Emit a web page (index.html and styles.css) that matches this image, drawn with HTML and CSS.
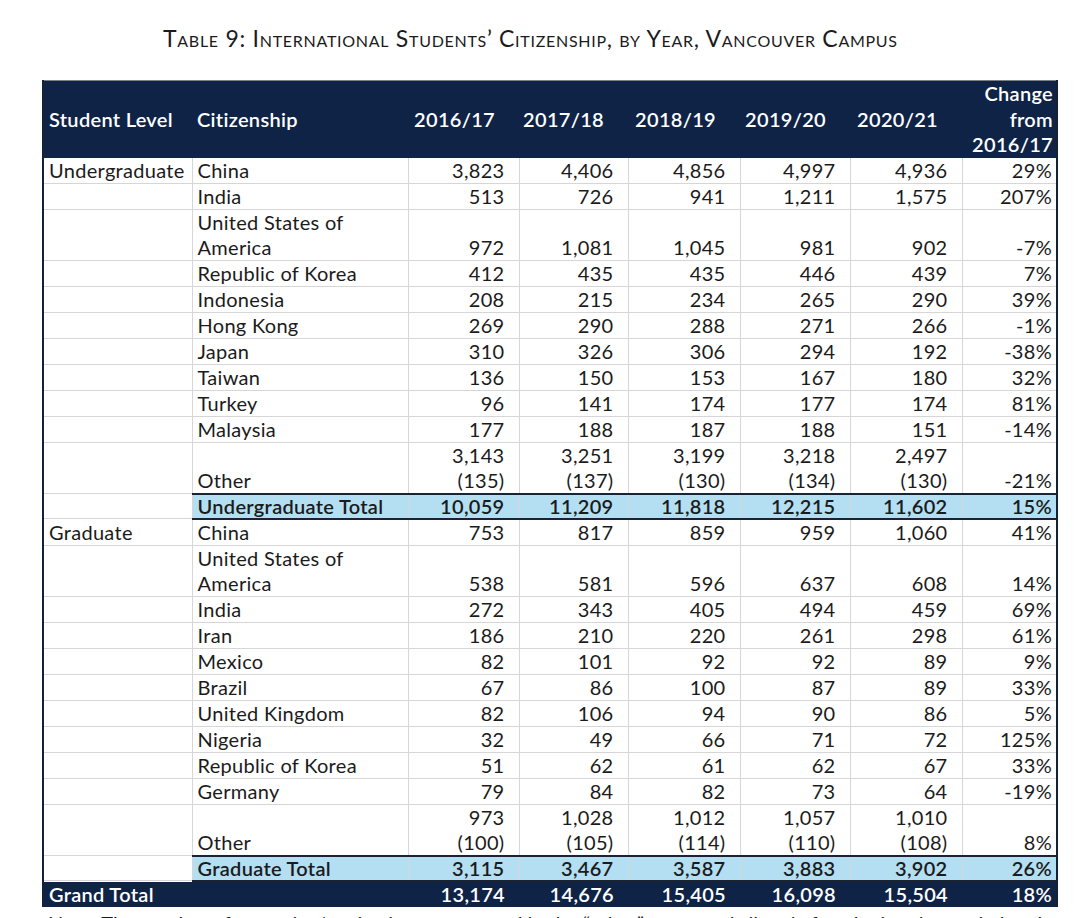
FILE: index.html
```html
<!DOCTYPE html>
<html>
<head>
<meta charset="utf-8">
<link rel="stylesheet" href="styles.css">
</head>
<body>
<div class="page">
  <h1 class="title">Table 9: International Students’ Citizenship, by Year, Vancouver Campus</h1>
  <table class="data">
    <colgroup>
      <col class="c-level"><col class="c-cit"><col class="c-y1"><col class="c-y2"><col class="c-y3"><col class="c-y4"><col class="c-y5"><col class="c-chg">
    </colgroup>
    <thead>
      <tr>
        <th class="lft">Student Level</th>
        <th class="lft">Citizenship</th>
        <th class="yr">2016/17</th>
        <th class="yr">2017/18</th>
        <th class="yr">2018/19</th>
        <th class="yr">2019/20</th>
        <th class="yr">2020/21</th>
        <th class="chg">Change<br>from<br>2016/17</th>
      </tr>
    </thead>
    <tbody>
      <tr><td>Undergraduate</td><td>China</td><td class="n">3,823</td><td class="n">4,406</td><td class="n">4,856</td><td class="n">4,997</td><td class="n">4,936</td><td class="p">29%</td></tr>
      <tr><td></td><td>India</td><td class="n">513</td><td class="n">726</td><td class="n">941</td><td class="n">1,211</td><td class="n">1,575</td><td class="p">207%</td></tr>
      <tr><td></td><td>United States of<br>America</td><td class="n">972</td><td class="n">1,081</td><td class="n">1,045</td><td class="n">981</td><td class="n">902</td><td class="p">-7%</td></tr>
      <tr><td></td><td>Republic of Korea</td><td class="n">412</td><td class="n">435</td><td class="n">435</td><td class="n">446</td><td class="n">439</td><td class="p">7%</td></tr>
      <tr><td></td><td>Indonesia</td><td class="n">208</td><td class="n">215</td><td class="n">234</td><td class="n">265</td><td class="n">290</td><td class="p">39%</td></tr>
      <tr><td></td><td>Hong Kong</td><td class="n">269</td><td class="n">290</td><td class="n">288</td><td class="n">271</td><td class="n">266</td><td class="p">-1%</td></tr>
      <tr><td></td><td>Japan</td><td class="n">310</td><td class="n">326</td><td class="n">306</td><td class="n">294</td><td class="n">192</td><td class="p">-38%</td></tr>
      <tr><td></td><td>Taiwan</td><td class="n">136</td><td class="n">150</td><td class="n">153</td><td class="n">167</td><td class="n">180</td><td class="p">32%</td></tr>
      <tr><td></td><td>Turkey</td><td class="n">96</td><td class="n">141</td><td class="n">174</td><td class="n">177</td><td class="n">174</td><td class="p">81%</td></tr>
      <tr><td></td><td>Malaysia</td><td class="n">177</td><td class="n">188</td><td class="n">187</td><td class="n">188</td><td class="n">151</td><td class="p">-14%</td></tr>
      <tr><td></td><td>Other</td><td class="n">3,143<br>(135)</td><td class="n">3,251<br>(137)</td><td class="n">3,199<br>(130)</td><td class="n">3,218<br>(134)</td><td class="n">2,497<br>(130)</td><td class="p">-21%</td></tr>
      <tr class="sub"><td class="blank"></td><td>Undergraduate Total</td><td class="n">10,059</td><td class="n">11,209</td><td class="n">11,818</td><td class="n">12,215</td><td class="n">11,602</td><td class="p">15%</td></tr>
      <tr><td>Graduate</td><td>China</td><td class="n">753</td><td class="n">817</td><td class="n">859</td><td class="n">959</td><td class="n">1,060</td><td class="p">41%</td></tr>
      <tr><td></td><td>United States of<br>America</td><td class="n">538</td><td class="n">581</td><td class="n">596</td><td class="n">637</td><td class="n">608</td><td class="p">14%</td></tr>
      <tr><td></td><td>India</td><td class="n">272</td><td class="n">343</td><td class="n">405</td><td class="n">494</td><td class="n">459</td><td class="p">69%</td></tr>
      <tr><td></td><td>Iran</td><td class="n">186</td><td class="n">210</td><td class="n">220</td><td class="n">261</td><td class="n">298</td><td class="p">61%</td></tr>
      <tr><td></td><td>Mexico</td><td class="n">82</td><td class="n">101</td><td class="n">92</td><td class="n">92</td><td class="n">89</td><td class="p">9%</td></tr>
      <tr><td></td><td>Brazil</td><td class="n">67</td><td class="n">86</td><td class="n">100</td><td class="n">87</td><td class="n">89</td><td class="p">33%</td></tr>
      <tr><td></td><td>United Kingdom</td><td class="n">82</td><td class="n">106</td><td class="n">94</td><td class="n">90</td><td class="n">86</td><td class="p">5%</td></tr>
      <tr><td></td><td>Nigeria</td><td class="n">32</td><td class="n">49</td><td class="n">66</td><td class="n">71</td><td class="n">72</td><td class="p">125%</td></tr>
      <tr><td></td><td>Republic of Korea</td><td class="n">51</td><td class="n">62</td><td class="n">61</td><td class="n">62</td><td class="n">67</td><td class="p">33%</td></tr>
      <tr><td></td><td>Germany</td><td class="n">79</td><td class="n">84</td><td class="n">82</td><td class="n">73</td><td class="n">64</td><td class="p">-19%</td></tr>
      <tr><td></td><td>Other</td><td class="n">973<br>(100)</td><td class="n">1,028<br>(105)</td><td class="n">1,012<br>(114)</td><td class="n">1,057<br>(110)</td><td class="n">1,010<br>(108)</td><td class="p">8%</td></tr>
      <tr class="sub"><td class="blank"></td><td>Graduate Total</td><td class="n">3,115</td><td class="n">3,467</td><td class="n">3,587</td><td class="n">3,883</td><td class="n">3,902</td><td class="p">26%</td></tr>
      <tr class="grand"><td colspan="2">Grand Total</td><td class="n">13,174</td><td class="n">14,676</td><td class="n">15,405</td><td class="n">16,098</td><td class="n">15,504</td><td class="p">18%</td></tr>
    </tbody>
  </table>
  <p class="note">Note: The number of countries/territories represented in the “other” category is listed after the headcount in brackets.</p>
</div>
</body>
</html>
```
FILE: styles.css
```css
html, body {
  margin: 0;
  padding: 0;
  background: #ffffff;
}
body {
  font-family: Lato, "Open Sans", "Liberation Sans", sans-serif;
  color: #1b1b1b;
  overflow: hidden;
}
.page {
  padding: 24px 0 0 42px;
}
.title {
  margin: 0 0 28px 121px;
  font-size: 23px;
  font-weight: 400;
  font-variant: small-caps;
  line-height: 28px;
  color: #1b1b1b;
  letter-spacing: 0.72px;
}
.data {
  border-collapse: collapse;
  table-layout: fixed;
  width: 1014px;
  font-size: 20px;
  letter-spacing: 0.3px;
  border-left: 2px solid #13213a;
  border-right: 2px solid #13213a;
}
.c-level { width: 149px; }
.c-cit { width: 216px; }
.c-y1 { width: 111px; }
.c-y2 { width: 109px; }
.c-y3 { width: 112px; }
.c-y4 { width: 110px; }
.c-y5 { width: 112px; }
.c-chg { width: 95px; }

thead th {
  background: #0f2346;
  color: #ffffff;
  font-weight: 600;
  line-height: 25.5px;
  padding: 0;
  vertical-align: middle;
  border-top: 1px solid #7a7f88;
}
thead tr {
  height: 77px;
}
th.lft {
  text-align: left;
  padding-left: 5px;
}
th.yr {
  text-align: right;
  padding-right: 24px;
}
th.chg {
  text-align: right;
  padding-right: 3px;
}
tbody td {
  line-height: 25px;
  padding: 0 0 0 5px;
  border: 1px solid #d6d6d6;
  vertical-align: bottom;
  white-space: nowrap;
  overflow: hidden;
}
tbody tr:first-child td {
  border-top: none;
}
tbody td:first-child {
  border-left: none;
}
tbody td:last-child {
  border-right: none;
}
td.n {
  text-align: right;
  padding: 0 14px 0 0;
}
td.p {
  text-align: right;
  padding: 0 4px 0 0;
}
tr.sub td {
  background: #b4dff2;
  font-weight: 600;
  border-top: 2px solid #1a2233;
  border-bottom: 2px solid #1a2233;
  line-height: 23px;
}
tr.sub td.blank {
  background: #ffffff;
  border-top: 1px solid #d6d6d6;
  border-bottom: 1px solid #d6d6d6;
}
tr.grand td {
  background: #0f2346;
  color: #ffffff;
  font-weight: 600;
  border: none;
  border-top: 1px solid #0f2346;
}
.note {
  margin: 4px 0 0 6px;
  font-size: 20px;
  line-height: 24px;
  color: #1b1b1b;
}
```
